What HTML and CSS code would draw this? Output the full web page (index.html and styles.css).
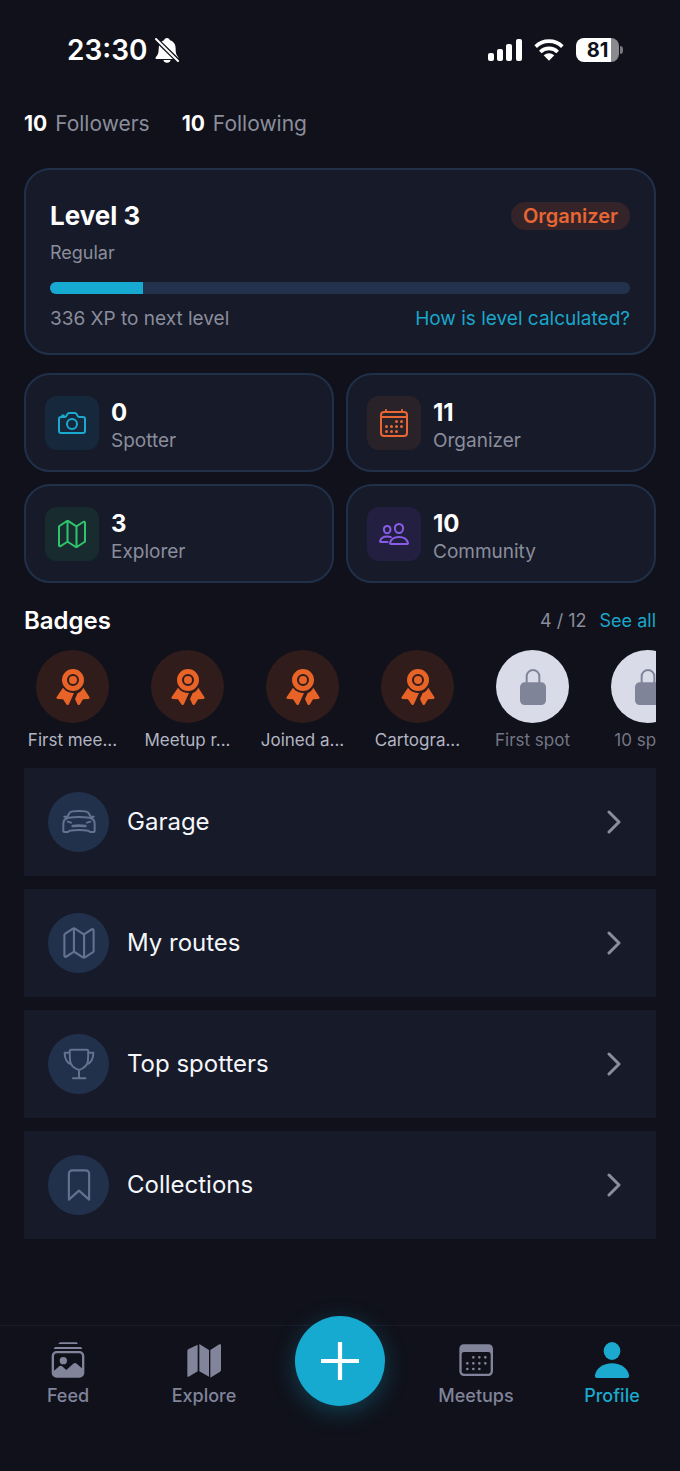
FILE: index.html
```html
<!DOCTYPE html>
<html lang="en">
<head>
    <meta charset="UTF-8">
    <meta name="viewport" content="width=device-width, initial-scale=1.0">
    <title>Profile</title>
    <link rel="stylesheet" href="styles.css">
</head>
<body>
    <!-- Shared icons -->
    <svg class="sprite" aria-hidden="true">
        <symbol id="map" viewBox="0 0 512 512">
            <path d="M313.27 124.64L198.73 51.36a32 32 0 00-29.28.35L56.51 127.49A16 16 0 0048 141.63v295.8a16 16 0 0023.49 14.14l97.82-63.79a32 32 0 0129.5-.24l111.86 73a32 32 0 0029.27-.11l115.43-75.94a16 16 0 008.63-14.2V74.57a16 16 0 00-23.49-14.14l-98 63.86a32 32 0 01-29.24.35zM328 128v336M184 48v336"/>
        </symbol>
        <symbol id="ribbon" viewBox="0 0 108 108">
            <path fill-rule="evenodd" d="M54 0a33 33 0 1 1 0 66a33 33 0 1 1 0-66zM54 15a18 18 0 1 0 0 36a18 18 0 1 0 0-36z"/>
            <circle cx="54" cy="33" r="12"/>
            <path d="M24 56L5 84c-2 3 0 6 3 6l16 1 10 15c2 3 6 3 8-1l15-33c-14 0-25-5-33-16zM85 56l18 28c2 3 0 6-3 6l-16 1-9 15c-2 3-6 3-8-1l-7-15 8-18c8-3 13-8 17-16z"/>
        </symbol>
        <symbol id="lock" viewBox="0 0 108 108">
            <rect x="15" y="40" width="78" height="68" rx="14"/>
            <path d="M35 42V22a19 19 0 0 1 38 0v20" fill="none" stroke="currentColor" stroke-width="6"/>
        </symbol>
        <symbol id="chevron" viewBox="0 0 24 24">
            <path d="M7 2l10 10L7 22"/>
        </symbol>
    </svg>

    <header class="status">
        <div class="status-left">
            <span class="time">23:30</span>
            <svg class="bell" viewBox="0 0 72 78" aria-label="Silent">
                <path fill="#fff" d="M36 3c5 0 8 3 9 7 12 4 17 13 17 26 0 14 3 19 8 25v5H2v-5c6-6 9-12 9-25 0-13 5-22 16-26 1-4 4-7 9-7zM25 69h22c-1 5-5 8-11 8s-10-3-11-8z"/>
                <path stroke="#10111a" stroke-width="14" d="M1 5l70 68"/>
                <path stroke="#fff" stroke-width="6" stroke-linecap="round" d="M3 6l66 66"/>
            </svg>
        </div>
        <div class="status-right">
            <svg class="signal" viewBox="0 0 34 22" aria-hidden="true">
                <rect x="0" y="14" width="6" height="8" rx="2"/>
                <rect x="9" y="10" width="6" height="12" rx="2"/>
                <rect x="18" y="5" width="6" height="17" rx="2"/>
                <rect x="28" y="0" width="6" height="22" rx="2"/>
            </svg>
            <svg class="wifi" viewBox="0 0 90 66" aria-hidden="true">
                <path d="M5 23a57 57 0 0 1 80 0M19 39a37 37 0 0 1 52 0"/>
                <path class="wifi-dot" d="M45 65L29 49q16-13 32 0z"/>
            </svg>
            <div class="battery"><span>81</span></div>
        </div>
    </header>

    <main>
        <div class="follows">
            <a href="#"><b>10</b> Followers</a>
            <a href="#"><b>10</b> Following</a>
        </div>

        <section class="level">
            <div class="row">
                <h1>Level 3</h1>
                <span class="tag">Organizer</span>
            </div>
            <p class="rank">Regular</p>
            <div class="progress" role="progressbar" aria-label="Level progress" aria-valuenow="16" aria-valuemin="0" aria-valuemax="100">
                <div class="progress-fill" style="width: 16%"></div>
            </div>
            <div class="row xp">
                <span>336 XP to next level</span>
                <a href="#">How is level calculated?</a>
            </div>
        </section>

        <section class="stats">
            <div class="stat">
                <div class="stat-icon cyan">
                    <svg class="line" viewBox="0 0 512 512"><path d="M350.54 148.68l-26.62-42.06C318.31 100.08 310.62 96 302 96h-92c-8.62 0-16.31 4.08-21.92 10.62l-26.62 42.06C155.85 155.23 148.62 160 140 160H80a32 32 0 00-32 32v192a32 32 0 0032 32h352a32 32 0 0032-32V192a32 32 0 00-32-32h-59c-8.65 0-16.85-4.77-22.46-11.32zM124 158v-22h-24v22"/><circle cx="256" cy="272" r="80"/></svg>
                </div>
                <div class="stat-text"><strong>0</strong><span>Spotter</span></div>
            </div>
            <div class="stat">
                <div class="stat-icon orange">
                    <svg class="line" viewBox="0 0 512 512">
                        <rect x="48" y="80" width="416" height="384" rx="48"/>
                        <path d="M128 48v32M384 48v32M464 160H48"/>
                        <g class="dots"><circle cx="296" cy="232" r="24"/><circle cx="376" cy="232" r="24"/><circle cx="136" cy="312" r="24"/><circle cx="216" cy="312" r="24"/><circle cx="296" cy="312" r="24"/><circle cx="376" cy="312" r="24"/><circle cx="136" cy="392" r="24"/><circle cx="216" cy="392" r="24"/><circle cx="296" cy="392" r="24"/></g>
                    </svg>
                </div>
                <div class="stat-text"><strong>11</strong><span>Organizer</span></div>
            </div>
            <div class="stat">
                <div class="stat-icon green"><svg class="line"><use href="#map"/></svg></div>
                <div class="stat-text"><strong>3</strong><span>Explorer</span></div>
            </div>
            <div class="stat">
                <div class="stat-icon purple">
                    <svg class="line" viewBox="0 0 512 512"><path d="M402 168c-2.93 40.67-33.1 72-66 72s-63.12-31.32-66-72c-3-42.31 26.37-72 66-72s69 30.46 66 72zM336 304c-65.17 0-127.84 32.37-143.54 95.41-2.08 8.34 3.15 16.59 11.72 16.59h263.65c8.57 0 13.77-8.25 11.72-16.59C463.85 335.36 401.18 304 336 304zM200 185.94c-2.34 32.48-26.72 58.06-53 58.06s-50.7-25.57-53-58.06C91.61 152.15 115.34 128 147 128s55.39 24.77 53 57.94zM206 306c-18.05-8.27-37.93-11.45-59-11.45-52 0-102.1 25.85-114.65 76.2-1.65 6.66 2.53 13.25 9.37 13.25H154"/></svg>
                </div>
                <div class="stat-text"><strong>10</strong><span>Community</span></div>
            </div>
        </section>

        <section class="badges">
            <div class="badges-head">
                <h2>Badges</h2>
                <span>4 / 12</span>
                <a href="#">See all</a>
            </div>
            <ul class="badge-list">
                <li class="badge"><div class="badge-icon"><svg><use href="#ribbon"/></svg></div><p>First mee...</p></li>
                <li class="badge"><div class="badge-icon"><svg><use href="#ribbon"/></svg></div><p>Meetup r...</p></li>
                <li class="badge"><div class="badge-icon"><svg><use href="#ribbon"/></svg></div><p>Joined a...</p></li>
                <li class="badge"><div class="badge-icon"><svg><use href="#ribbon"/></svg></div><p>Cartogra...</p></li>
                <li class="badge locked"><div class="badge-icon"><svg><use href="#lock"/></svg></div><p>First spot</p></li>
                <li class="badge locked"><div class="badge-icon"><svg><use href="#lock"/></svg></div><p>10 spots</p></li>
            </ul>
        </section>

        <nav class="menu">
            <a href="#">
                <span class="menu-icon"><svg viewBox="0 0 108 108">
                    <path d="M16 43l10-17c3-4 7-5 28-5s25 1 28 5l10 17"/>
                    <path d="M22 41q32-4 64 0c10 2 15 8 15 18v22q0 3-3 3H88q-3 0-5-4-29-4-58 0-2 4-5 4H10q-3 0-3-3V59c0-10 5-16 15-18z"/>
                    <path d="M10 38h7M91 38h7M20 53l10 3M88 53l-10 3"/>
                    <path stroke-width="8" d="M35 66q19-2 38 0"/>
                </svg></span>
                Garage
                <svg class="chevron"><use href="#chevron"/></svg>
            </a>
            <a href="#">
                <span class="menu-icon"><svg class="line"><use href="#map"/></svg></span>
                My routes
                <svg class="chevron"><use href="#chevron"/></svg>
            </a>
            <a href="#">
                <span class="menu-icon"><svg viewBox="0 0 108 108">
                    <path d="M31 11h46q5 0 5 5l-1 26c-1 17-12 25-27 30-15-5-26-13-27-30l-1-26q0-5 5-5zM54 72v25M36 97h37M27 20H11c0 18 6 30 20 35M81 20h16c0 18-6 30-20 35"/>
                </svg></span>
                Top spotters
                <svg class="chevron"><use href="#chevron"/></svg>
            </a>
            <a href="#">
                <span class="menu-icon"><svg class="line" viewBox="0 0 512 512"><path d="M352 48H160a48 48 0 00-48 48v368l144-128 144 128V96a48 48 0 00-48-48z"/></svg></span>
                Collections
                <svg class="chevron"><use href="#chevron"/></svg>
            </a>
        </nav>
    </main>

    <nav class="tabs">
        <a href="#">
            <svg viewBox="0 0 108 108">
                <path d="M27 4l3-3h50l4 5H24zM15 15h78l4 6H11zM20 27h68a15 15 0 0 1 15 15v50a15 15 0 0 1-15 15H20A15 15 0 0 1 5 92V42a15 15 0 0 1 15-15z"/>
                <path fill="#10111a" d="M21 34h66q9 0 9 9v36L81 66q-6-6-12 0L49 84 38 74q-6-5-12 0L12 86V43q0-9 9-9z"/>
                <circle cx="40" cy="56" r="11"/>
            </svg>
            Feed
        </a>
        <a href="#">
            <svg viewBox="0 0 108 108">
                <path d="M35 8v80L8 104q-4 2-4-3V27q0-4 4-6zM40 6l29 18v80L40 88zM73 24l27-17q5-2 5 3v74q0 4-4 6l-28 17z"/>
            </svg>
            Explore
        </a>
        <button class="add" aria-label="Add">
            <svg viewBox="0 0 36 36"><path d="M18 1v34M1 18h34"/></svg>
        </button>
        <a href="#">
            <svg viewBox="0 0 108 108">
                <path fill-rule="evenodd" d="M17 7h75a13 13 0 0 1 13 13v68a14 14 0 0 1-14 14H18A14 14 0 0 1 4 88V20A13 13 0 0 1 17 7zM18 30q-7 0-7 7v50q0 8 8 8h71q8 0 8-8V37q0-7-7-7z"/>
                <path class="tab-dots" d="M46 46h0M64 46h0M82 46h0M28 64h0M46 64h0M64 64h0M82 64h0M28 81h0M46 81h0M64 81h0"/>
            </svg>
            Meetups
        </a>
        <a href="#" class="active">
            <svg viewBox="0 0 108 108">
                <ellipse cx="54" cy="27" rx="25" ry="27"/>
                <path d="M54 64c27 0 48 15 51 36q1 8-6 8H9q-7 0-6-8c3-21 24-36 51-36z"/>
            </svg>
            Profile
        </a>
    </nav>
</body>
</html>
```
FILE: styles.css
```css
* {
    box-sizing: border-box;
}
body {
    margin: 0;
    min-height: 100vh;
    display: flex;
    flex-direction: column;
    background-color: #10111a;
    color: #8b8d9b;
    font-family: Inter, "Liberation Sans", sans-serif;
    font-size: 18px;
    line-height: 24px;
}
a {
    color: inherit;
    text-decoration: none;
}
h1, h2, p, ul {
    margin: 0;
    padding: 0;
}
h1, h2, strong, b {
    color: #fff;
}
.sprite {
    display: none;
}
svg {
    fill: currentColor;
    flex-shrink: 0;
}
.line {
    fill: none;
    stroke: currentColor;
    stroke-width: 32;
    stroke-linecap: round;
    stroke-linejoin: round;
}
.dots {
    fill: currentColor;
    stroke: none;
}

/* Status bar */
.status {
    display: flex;
    justify-content: space-between;
    align-items: center;
    height: 100px;
    padding: 0 57px 0 67px;
    color: #fff;
}
.status-left, .status-right {
    display: flex;
    align-items: center;
}
.status-left {
    gap: 8px;
}
.status-right {
    gap: 12px;
}
.time {
    font-size: 28px;
    font-weight: 600;
}
.bell {
    width: 24px;
    height: 26px;
}
.signal {
    width: 34px;
    height: 22px;
}
.wifi {
    width: 30px;
    height: 22px;
    fill: none;
    stroke: #fff;
    stroke-width: 11;
}
.wifi-dot {
    fill: #fff;
    stroke: none;
}
.battery {
    display: flex;
    align-items: center;
    gap: 1px;
}
.battery span {
    width: 43px;
    border-radius: 8px;
    background: linear-gradient(to right, #fff 81%, #8a8a8f 81%);
    color: #10111a;
    font-size: 20px;
    font-weight: 700;
    text-align: center;
}
.battery::after {
    content: "";
    width: 3px;
    height: 8px;
    border-radius: 0 4px 4px 0;
    background-color: #77777c;
}

main {
    flex: 1;
    padding: 0 24px;
}
.follows {
    display: flex;
    gap: 32px;
    padding: 12px 0 32px;
    font-size: 21px;
}
.follows b {
    margin-right: 2px;
    font-weight: 700;
}

/* Level card */
.level {
    padding: 32px 24px 22px;
    border: 2px solid #213049;
    border-radius: 26px;
    background-color: #161a29;
}
.row {
    display: flex;
    justify-content: space-between;
    align-items: center;
}
.xp {
    font-size: 19px;
}
h1 {
    font-size: 26px;
    line-height: 28px;
}
.tag {
    padding: 2px 12px;
    border-radius: 14px;
    background-color: #35232a;
    color: #e66733;
    font-size: 20px;
    font-weight: 600;
}
.rank {
    padding: 11px 0 17px;
}
.progress {
    height: 12px;
    margin-bottom: 13px;
    border-radius: 6px;
    background-color: #23324c;
    overflow: hidden;
}
.progress-fill {
    height: 100%;
    background-color: #16aad0;
}
.level a, .badges a {
    color: #1ba6c9;
}

/* Stats */
.stats {
    display: grid;
    grid-template-columns: 1fr 1fr;
    gap: 12px;
    margin-top: 18px;
}
.stat {
    display: flex;
    align-items: center;
    gap: 12px;
    padding: 15px 19px;
    border: 2px solid #213049;
    border-radius: 26px;
    background-color: #161a29;
}
.stat-icon {
    display: grid;
    place-items: center;
    width: 54px;
    height: 54px;
    border-radius: 12px;
}
.stat-icon svg {
    width: 32px;
    height: 32px;
}
.stat-text {
    padding-top: 9px;
}
.stat strong, .stat span {
    display: block;
    font-size: 19px;
    line-height: 28px;
}
.stat strong {
    font-size: 24px;
}
.cyan {
    background-color: #16293c;
    color: #1aa9cf;
}
.orange {
    background-color: #2a2229;
    color: #e66733;
}
.green {
    background-color: #182c30;
    color: #2fc56d;
}
.purple {
    background-color: #221f41;
    color: #875ce6;
}

/* Badges */
.badges {
    margin-top: 22px;
}
.badges-head {
    display: flex;
    align-items: center;
    gap: 13px;
    height: 32px;
    margin-bottom: 13px;
}
h2 {
    flex: 1;
    font-size: 24px;
    font-weight: 600;
}
.badge-list {
    display: flex;
    gap: 18px;
    overflow: hidden;
    list-style: none;
}
.badge {
    flex: 0 0 97px;
    text-align: center;
}
.badge-icon {
    display: grid;
    place-items: center;
    width: 73px;
    height: 73px;
    margin: 0 auto 5px;
    border-radius: 50%;
    background-color: #301d1b;
    color: #e86327;
}
.badge-icon svg {
    width: 36px;
    height: 36px;
}
.badge p {
    color: #b3b5c3;
    font-size: 17px;
    white-space: nowrap;
}
.locked .badge-icon {
    background-color: #d9dce8;
    color: #7f8498;
}
.locked p {
    color: #747684;
}

/* Menu */
.menu {
    display: grid;
    gap: 13px;
    margin-top: 16px;
}
.menu a {
    display: flex;
    align-items: center;
    gap: 18px;
    padding: 24px;
    background-color: #161a29;
    color: #f5f6fa;
    font-size: 24px;
}
.menu-icon {
    display: grid;
    place-items: center;
    width: 61px;
    height: 60px;
    border-radius: 50%;
    background-color: #22314b;
    color: #64718f;
}
.menu-icon svg {
    width: 36px;
    height: 36px;
    fill: none;
    stroke: currentColor;
    stroke-width: 6;
    stroke-linecap: round;
    stroke-linejoin: round;
}
.menu-icon .line {
    stroke-width: 30;
}
.chevron {
    width: 24px;
    height: 24px;
    margin-left: auto;
    margin-right: 6px;
    fill: none;
    stroke: #8b8d9b;
    stroke-width: 3;
    stroke-linecap: round;
    stroke-linejoin: round;
}

/* Tab bar */
.tabs {
    position: sticky;
    bottom: 0;
    display: grid;
    grid-template-columns: repeat(5, 1fr);
    justify-items: center;
    height: 146px;
    border-top: 1px solid #181b29;
    background-color: #10111a;
    font-size: 18px;
    font-weight: 500;
}
.tabs a {
    display: flex;
    flex-direction: column;
    align-items: center;
    gap: 6px;
    height: 82px;
    padding-top: 16px;
    color: #81849a;
}
.tabs a svg {
    width: 36px;
    height: 36px;
}
.tabs .active {
    color: #1ba9cf;
}
.tab-dots {
    stroke: currentColor;
    stroke-width: 8;
    stroke-linecap: round;
}
.add {
    display: grid;
    place-items: center;
    width: 90px;
    height: 90px;
    margin-top: -10px;
    padding: 0;
    border: none;
    border-radius: 50%;
    background-color: #16aad0;
    box-shadow: 0 6px 24px rgba(22, 170, 208, 0.3);
    cursor: pointer;
}
.add svg {
    width: 38px;
    height: 38px;
    stroke: #fff;
    stroke-width: 4;
    stroke-linecap: round;
}
```
